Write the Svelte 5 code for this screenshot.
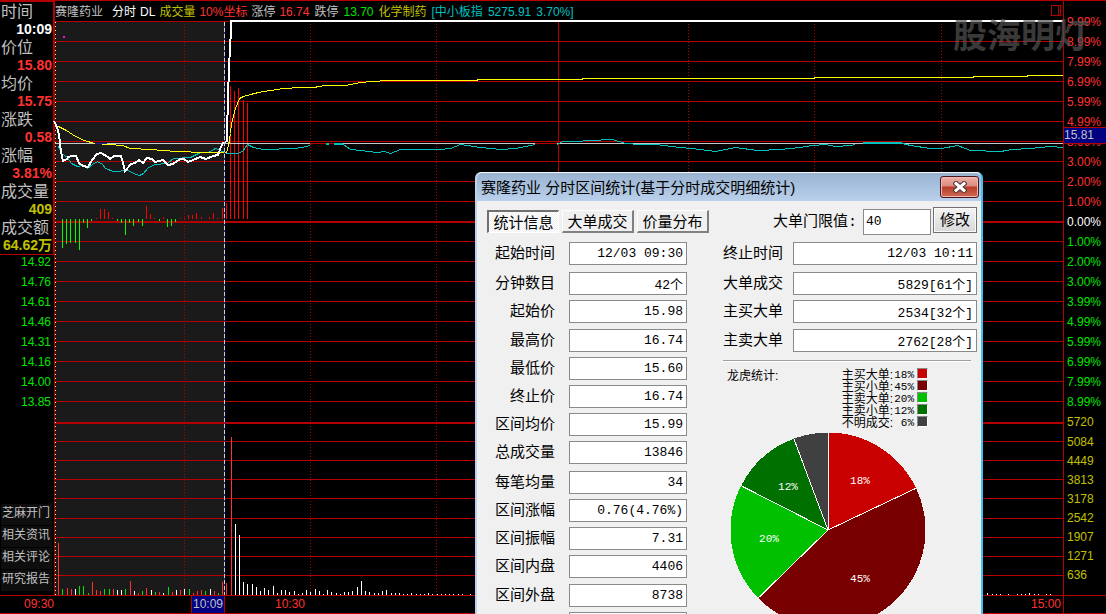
<script>
  const readout = [
    ['时间', '10:09', 'white'],
    ['价位', '15.80', 'red'],
    ['均价', '15.75', 'red'],
    ['涨跌', '0.58', 'red'],
    ['涨幅', '3.81%', 'red'],
    ['成交量', '409', 'yellow'],
    ['成交额', '64.62万', 'yellow']
  ];
  const prices = ['14.92', '14.76', '14.61', '14.46', '14.31', '14.16', '14.00', '13.85'];
  const links = ['芝麻开门', '相关资讯', '相关评论', '研究报告'];

  const up = ['9.99%', '8.99%', '7.99%', '6.99%', '5.99%', '4.99%', '3.99%', '3.00%', '2.00%', '1.00%'];
  const down = ['1.00%', '2.00%', '3.00%', '3.99%', '4.99%', '5.99%', '6.99%', '7.99%', '8.99%'];
  const volumes = ['5084', '4449', '3813', '3178', '2542', '1907', '1271', '636'];

  const chartInfo = [
    ['分时', 'white'],
    ['DL', 'white'],
    ['成交量', 'yellow'],
    ['10%坐标', 'red'],
    ['涨停', 'gray']
  ];
  const quoteInfo = [
    ['16.74', 'red'],
    ['跌停', 'gray'],
    ['13.70', 'green'],
    ['化学制药', 'yellow'],
    ['[中小板指', 'cyan'],
    ['5275.91', 'cyan'],
    ['3.70%]', 'cyan']
  ];

  const priceGrid = Array.from({ length: 20 }, (_, i) => 21 + i * 20).filter((y) => y !== 221);
  const volumeGrid = [441, 460, 479, 498, 518, 537, 556, 575];
  const halfHours = [184, 310, 436, 688, 814, 941];

  const priceLine =
    '54,121 57,127 59,135 61,152 63,161 67,159 68,157 72,156 76,156 79,163 83,166 88,167 92,160 97,154 101,153 108,157 110,159 114,156 121,156 123,163 125,171 131,164 135,163 139,160 143,163 147,158 152,159 155,162 163,160 168,165 173,164 180,159 184,159 188,162 193,160 200,157 206,159 213,156 218,155 221,147 223,143 227,141 227,121 228,110 228,97 229,67 231,30 231,21 1063,21';
  const averageLine =
    '58,126 66,130 75,136 84,140 94,143 108,144 122,145 130,148 150,149 176,151 205,152 226,152 228,145 230,133 231,123 235,108 239,98 243,96 250,94 258,92 270,90 283,88 300,87 313,87 325,85 345,85 355,83 360,82 372,81 388,80 477,80 477,79 582,79 582,78 814,78 814,77 973,77 973,76 1027,76 1027,75 1063,75';
  const indexLines = [
    '58,146 61,153 67,157 71,163 77,166 82,165 87,168 92,164 97,161 102,164 105,168 113,171 128,170 133,173 139,175 143,173 148,167 155,164 167,163 173,158 190,157 200,152 208,152 215,148 222,151 227,153 237,153 242,151 247,144 253,147 263,149 295,148 300,147 307,146 310,144',
    '334,144 343,144 350,149 360,150 377,152 384,151 390,153 400,149 425,149 440,149 450,148 460,144 480,147 500,149 515,148 530,145 535,144',
    '557,144 562,141 575,141 590,140 612,139 625,143 640,144 655,144 680,147 700,149 715,151 735,147 757,150 780,149 800,147 812,145 825,144 835,146 850,145 855,144',
    '863,143 872,143 886,142 902,143 910,145 930,148 941,148 957,145 970,150 1000,151 1012,149 1030,148 1050,146 1063,147'
  ];

  // [x, end y] measured from the flow baseline
  const flowUp = [
    [96, 218], [100, 209], [104, 209], [108, 212], [112, 218], [146, 206], [150, 214], [154, 218], [163, 217],
    [180, 218], [184, 218], [188, 215], [192, 215], [196, 213], [201, 217], [209, 217], [213, 213], [217, 218],
    [222, 208], [226, 203], [230, 86], [234, 91], [238, 88], [243, 100], [247, 103]
  ];
  const flowDown = [
    [62, 248], [66, 244], [70, 243], [75, 243], [79, 250], [83, 223], [87, 228], [91, 221], [117, 221], [121, 223],
    [125, 235], [129, 223], [133, 226], [138, 222], [142, 226], [159, 221], [167, 227], [171, 226], [175, 222]
  ];

  const R = '#ff3232', G = '#00e600', W = '#fff';
  const volumeBars = [
    [58, 543, R], [62, 589, G], [67, 588, R], [71, 589, R], [75, 589, W], [79, 586, G], [83, 586, G], [88, 593, G],
    [92, 582, R], [96, 590, R], [100, 591, R], [104, 589, G], [109, 589, G], [113, 589, R], [117, 590, W],
    [121, 590, W], [125, 589, G], [130, 581, R], [134, 591, W], [138, 593, R], [142, 591, G], [146, 588, R],
    [151, 590, W], [155, 592, G], [159, 592, R], [163, 593, W], [168, 587, G], [172, 592, R], [176, 590, W],
    [180, 590, R], [184, 589, W], [189, 589, G], [193, 593, R], [197, 591, R], [201, 590, R], [205, 591, G],
    [210, 589, W], [214, 591, R], [218, 593, G], [222, 582, R], [226, 583, R], [231, 437, R], [235, 524, W],
    [239, 535, W], [243, 582, W], [247, 584, W], [252, 584, W], [256, 587, W], [260, 591, W], [264, 588, W],
    [268, 590, W], [273, 586, W], [277, 593, W], [281, 590, W], [285, 590, W], [289, 592, W], [294, 591, W],
    [298, 594, W], [302, 593, W], [306, 590, W], [310, 592, W], [315, 589, W], [319, 591, W], [323, 594, W],
    [327, 590, W], [331, 592, W], [336, 593, W], [340, 594, W], [344, 592, W], [348, 592, W], [352, 591, W],
    [357, 587, W], [361, 581, W], [365, 591, W], [369, 592, W], [374, 593, W], [378, 593, W], [382, 591, W],
    [386, 590, W], [391, 593, W], [395, 593, W], [399, 593, W], [403, 594, W], [407, 594, W], [411, 593, W],
    [416, 594, W], [420, 594, W], [424, 594, W], [428, 593, W], [432, 594, W], [437, 594, W], [441, 594, W],
    [445, 594, W], [449, 594, W], [453, 594, W], [458, 594, W], [462, 594, W], [470, 594, W], [987, 593, W],
    [992, 594, W], [996, 594, W], [1000, 594, W], [1008, 594, W], [1017, 594, W], [1021, 594, W], [1025, 594, W],
    [1029, 593, W], [1034, 594, W], [1038, 594, W], [1046, 594, W], [1050, 594, W]
  ];

  const tabs = ['统计信息', '大单成交', '价量分布'];
  let activeTab = $state(0);
  let threshold = $state('40');

  const leftGroups = [
    [['起始时间', '12/03 09:30']],
    [['分钟数目', '42个'], ['起始价', '15.98']],
    [['最高价', '16.74'], ['最低价', '15.60'], ['终止价', '16.74'], ['区间均价', '15.99'], ['总成交量', '13846']],
    [['每笔均量', '34'], ['区间涨幅', '0.76(4.76%)'], ['区间振幅', '7.31'], ['区间内盘', '4406']],
    [['区间外盘', '8738'], ['', '']]
  ];
  const rightGroups = [
    [['终止时间', '12/03 10:11']],
    [['大单成交', '5829[61个]'], ['主买大单', '2534[32个]']],
    [['主卖大单', '2762[28个]']]
  ];

  const slices = [
    { name: '主买大单:', pct: '18%', color: '#c80000', from: 0, to: 0.1795, lx: 130, ly: 48 },
    { name: '主买小单:', pct: '45%', color: '#780000', from: 0.1795, to: 0.627, lx: 130, ly: 146 },
    { name: '主卖大单:', pct: '20%', color: '#00c000', from: 0.627, to: 0.825, lx: 39, ly: 106 },
    { name: '主卖小单:', pct: '12%', color: '#007000', from: 0.825, to: 0.943, lx: 58, ly: 54 },
    { name: '不明成交:', pct: '6%', color: '#404040', from: 0.943, to: 1 }
  ];
  const edge = (t) => {
    const a = t * Math.PI * 2;
    return [98 + 97.5 * Math.sin(a), 98 - 97.5 * Math.cos(a)];
  };
  const wedge = (s) => {
    const [x1, y1] = edge(s.from);
    const [x2, y2] = edge(s.to);
    return `M98 98L${x1} ${y1}A97.5 97.5 0 0 1 ${x2} ${y2}Z`;
  };
</script>

{#snippet fields(groups, side)}
  {#each groups as group, g}
    <div class="group">
      {#each group as [label, value], i}
        <div class="field">
          <label for="{side}-{g}-{i}">{label}</label>
          <input id="{side}-{g}-{i}" type="text" readonly {value} />
        </div>
      {/each}
    </div>
  {/each}
{/snippet}

<div class="terminal">
  <aside class="side">
    <dl class="readout">
      {#each readout as [label, value, tone]}
        <dt>{label}</dt>
        <dd class={tone}>{value}</dd>
      {/each}
    </dl>
    <div class="side-lower">
      <div class="prices green">
        {#each prices as p}<span>{p}</span>{/each}
      </div>
      <nav class="links">
        {#each links as l}<button type="button">{l}</button>{/each}
      </nav>
    </div>
  </aside>

  <header class="bar">
    <span class="gray stock">赛隆药业</span>
    {#each chartInfo as [text, tone]}<span class={tone}>{text}</span>{/each}
    <div class="quote">
      {#each quoteInfo as [text, tone]}<span class={tone}>{text}</span>{/each}
    </div>
    <svg class="pane-icon" viewBox="0 0 10 11" width="10" height="11" shape-rendering="crispEdges">
      <path d="M.5 .5H9.5V10.5H.5ZM7.5 .5V10.5" fill="none" stroke="#b40000" />
    </svg>
  </header>

  <svg class="chart" viewBox="55 21 1008 574" preserveAspectRatio="none" shape-rendering="crispEdges">
    <rect x="55" y="22" width="169" height="573" fill="#1a1a1a" />
    <g fill="#b40000">
      {#each priceGrid as y}<rect x="55" {y} width="1008" height="1" />{/each}
      {#each volumeGrid as y}<rect x="55" {y} width="1008" height="1" />{/each}
      <rect x="55" y="221" width="1008" height="2" />
      <rect x="55" y="422" width="1008" height="2" />
      <rect x="558" y="22" width="1" height="573" />
    </g>
    <g stroke="#b40000" stroke-dasharray="1 2">
      {#each halfHours as x}<path d="M{x + 0.5} 24V595" />{/each}
    </g>
    <path d="M55.5 22V595" stroke="#ffff96" stroke-dasharray="1 3" />

    <g fill="#f00">
      {#each flowUp as [x, y]}<rect {x} {y} width="1" height={219 - y} />{/each}
    </g>
    <g fill="#0f0">
      {#each flowDown as [x, y]}<rect {x} y="219" width="1" height={y - 219} />{/each}
    </g>
    {#each volumeBars as [x, y, color]}<rect {x} {y} width="1" height={595 - y} fill={color} />{/each}

    <rect x="55" y="143" width="1008" height="1" fill="#c8c8c8" />
    <rect x="310" y="143" width="24" height="1" fill="#b40000" />
    <rect x="535" y="143" width="22" height="1" fill="#b40000" />
    <rect x="326" y="143" width="3" height="2" fill="#00c0c0" />
    <rect x="334" y="143" width="9" height="2" fill="#00c0c0" />
    <rect x="863" y="142" width="39" height="2" fill="#00c0c0" />

    {#each indexLines as points}
      <polyline {points} fill="none" stroke="#00c0c0" transform="translate(.5 .5)" />
    {/each}
    <polyline points={averageLine} fill="none" stroke="#ff0" transform="translate(.5 .5)" />
    <rect x="95" y="143" width="12" height="1" fill="#2020a0" />
    <polyline points={priceLine} fill="none" stroke="#fff" stroke-width="2" />
    <rect x="224" y="22" width="1" height="573" fill="#3030a0" />
    <path d="M224.5 22V595" stroke="#d0d0d0" stroke-dasharray="4 2" />
    <rect x="63" y="36" width="2" height="2" fill="#f0f" />
  </svg>

  <aside class="scale">
    <div class="red">{#each up as v}<span>{v}</span>{/each}</div>
    <div class="white"><span>0.00%</span></div>
    <div class="green">{#each down as v}<span>{v}</span>{/each}</div>
    <div class="yellow"><span>5720</span></div>
    <div class="yellow volumes">{#each volumes as v}<span>{v}</span>{/each}</div>
    <output class="marker">15.81</output>
  </aside>

  <footer class="times red">
    <span class="open">09:30</span>
    <div class="axis">
      <span class="cursor">10:09</span>
      <span class="next">10:30</span>
      <span class="close-time">15:00</span>
    </div>
    <span class="corner"></span>
  </footer>

  <div class="watermark">股海明灯</div>

  <section class="dialog" aria-label="分时区间统计">
    <div class="title">
      <h1>赛隆药业 分时区间统计(基于分时成交明细统计)</h1>
      <button type="button" class="close" aria-label="关闭">
        <svg viewBox="0 0 14 12" width="14" height="12">
          <path d="M3 2.5L11 9.5M11 2.5L3 9.5" stroke="#4a3038" stroke-width="5" stroke-linecap="square" />
          <path d="M3 2.5L11 9.5M11 2.5L3 9.5" stroke="#fff" stroke-width="3" stroke-linecap="square" />
        </svg>
      </button>
    </div>

    <div class="body">
      <div class="tools">
        <div class="tabs" role="tablist">
          {#each tabs as tab, i}
            <button type="button" role="tab" aria-selected={activeTab === i} class:active={activeTab === i} onclick={() => (activeTab = i)}>{tab}</button>
          {/each}
        </div>
        <form class="threshold" onsubmit={(e) => e.preventDefault()}>
          <label for="threshold">大单门限值:</label>
          <input id="threshold" type="text" bind:value={threshold} />
          <button type="submit">修改</button>
        </form>
      </div>

      <div class="columns">
        <div class="left">{@render fields(leftGroups, 'left')}</div>
        <div class="right">
          {@render fields(rightGroups, 'right')}
          <hr />
          <div class="dragon">
            <span>龙虎统计:</span>
            <ul>
              {#each slices as s}
                <li><span>{s.name}</span><span class="pct">{s.pct}</span><i style:background={s.color}></i></li>
              {/each}
            </ul>
          </div>
          <svg class="pie" viewBox="0 0 196 196" width="196" height="196">
            <g shape-rendering="crispEdges">
              {#each slices as s}<path d={wedge(s)} fill={s.color} />{/each}
              {#each slices as s}
                <line x1="98" y1="98" x2={edge(s.to)[0]} y2={edge(s.to)[1]} stroke="#fff" />
              {/each}
            </g>
            {#each slices.filter((s) => s.lx) as s}
              <text x={s.lx} y={s.ly + 4} text-anchor="middle">{s.pct}</text>
            {/each}
          </svg>
        </div>
      </div>
    </div>
  </section>
</div>

<style>
  :global(body) {
    background: #000;
  }
  .terminal {
    position: relative;
    display: grid;
    grid-template-columns: 55px minmax(0, 1fr) 43px;
    grid-template-rows: 21px auto auto;
    min-height: 100vh;
    overflow: hidden;
    background: #000;
    color: #c0c0c0;
    font: 12px/20px 'Liberation Sans', 'Noto Sans CJK SC', sans-serif;
  }
  .terminal * {
    box-sizing: border-box;
  }
  button,
  input {
    font: inherit;
    color: inherit;
    margin: 0;
    padding: 0;
  }
  .white { color: #fff; }
  .gray { color: #c0c0c0; }
  .red { color: #ff3232; }
  .yellow { color: #c0c000; }
  .green { color: #00e600; }
  .cyan { color: #00c0c0; }

  .side {
    grid-row: 1 / 3;
    display: flex;
    flex-direction: column;
  }
  .readout {
    margin: 0;
    border: solid #b40000;
    border-width: 2px 2px 1px 0;
    font-size: 16px;
    line-height: 18px;
  }
  .readout dt {
    padding-left: 1px;
    height: 18px;
    line-height: 20px;
  }
  .readout dd {
    margin: 0;
    height: 18px;
    padding-right: 1px;
    text-align: right;
    font-size: 14px;
    font-weight: bold;
    white-space: nowrap;
  }
  .side-lower {
    flex: 1;
    display: flex;
    flex-direction: column;
    justify-content: space-between;
    border-right: 1px solid #b40000;
  }
  .prices {
    display: grid;
    margin-top: -3px;
    padding-right: 3px;
    text-align: right;
  }
  .links {
    display: grid;
    gap: 1px;
    padding: 0 2px 4px 1px;
  }
  .links button {
    height: 21px;
    padding: 0 0 2px 1px;
    border: 0;
    background: #0e0e0e;
    text-align: left;
    line-height: 19px;
    white-space: nowrap;
  }

  .bar {
    display: flex;
    gap: 4px;
    border-top: 1px solid #b40000;
    line-height: 22px;
    white-space: nowrap;
  }
  .stock {
    margin-right: 5px;
  }
  .quote {
    display: flex;
    gap: 5px;
  }
  .pane-icon {
    margin: 4px 2px 0 auto;
  }
  .chart {
    display: block;
    width: 100%;
    height: 574px;
    overflow: visible;
  }

  .scale {
    position: relative;
    grid-column: 3;
    grid-row: 1 / 3;
    border: solid #b40000;
    border-width: 1px 0 0 1px;
    padding-top: 11px;
  }
  .scale span {
    display: block;
    padding-left: 3px;
  }
  .volumes span {
    line-height: 19px;
  }
  .volumes span:first-child {
    line-height: 20px;
  }
  .marker {
    position: absolute;
    top: 126px;
    left: 0;
    right: 0;
    height: 17px;
    border: solid #b40000;
    border-width: 1px 0;
    background: #000080;
    color: #c0c0c0;
    line-height: 15px;
  }

  .times {
    grid-column: 1 / -1;
    display: grid;
    grid-template-columns: 55px minmax(0, 1fr) 43px;
    border: solid #b40000;
    border-width: 1px 0;
    line-height: 17px;
  }
  .open {
    padding-right: 1px;
    text-align: right;
  }
  .axis {
    display: grid;
    grid-template-columns: 34px 85px 1fr;
    padding-left: 136px;
  }
  .cursor {
    border: solid #b40000;
    border-width: 0 1px;
    background: #000080;
    color: #c0c0c0;
    text-align: center;
  }
  .next {
    text-align: right;
    padding-right: 5px;
  }
  .close-time {
    text-align: right;
    padding-right: 2px;
  }
  .corner {
    border-left: 1px solid #b40000;
  }

  .watermark {
    position: absolute;
    top: 16px;
    right: 17px;
    color: rgba(84, 84, 84, 0.7);
    font-size: 34px;
    font-weight: bold;
    line-height: 40px;
  }

  .dialog {
    position: absolute;
    top: 172px;
    right: 123px;
    width: 508px;
    border: solid;
    border-width: 1px 2px 2px;
    border-color: #f4f8fc #40bff0 #40bff0 #bcd3ee;
    border-radius: 6px 6px 0 0;
    background: #f0f0f0;
    color: #000;
    font-family: 'Liberation Mono', 'Noto Sans CJK SC', monospace;
    font-size: 15px;
  }
  .title {
    display: flex;
    justify-content: space-between;
    align-items: flex-start;
    height: 28px;
    padding: 3px 2px 0 4px;
    border-radius: 5px 5px 0 0;
    background: linear-gradient(#98b2d0, #bad1ec);
  }
  .title h1 {
    margin: 0;
    font: 15px/24px 'Liberation Sans', 'Noto Sans CJK SC', sans-serif;
    white-space: nowrap;
  }
  .close {
    display: grid;
    place-items: center;
    width: 39px;
    height: 22px;
    border: 1px solid #481420;
    border-radius: 3px;
    background: linear-gradient(#eeb0a6, #dc8c80 45%, #b83c28 50%, #cc6a54);
    box-shadow: inset 0 0 0 1px #f0b8b0;
  }
  .body {
    padding: 6px 4px 6px 10px;
  }
  .tools {
    display: flex;
    justify-content: space-between;
    align-items: flex-start;
    height: 28px;
    margin-bottom: 7px;
  }
  .tabs {
    display: flex;
    gap: 3px;
    padding-top: 3px;
  }
  .tabs button {
    width: 72px;
    height: 23px;
    border: solid;
    border-width: 1px 2px 2px 1px;
    border-color: #fff #808080 #808080 #fff;
    background: #f0f0f0;
    padding-top: 3px;
    line-height: 20px;
    white-space: nowrap;
  }
  .tabs .active {
    border-width: 2px 1px 1px 2px;
    border-color: #707070 #fff #fff #707070;
    background: repeating-conic-gradient(#f0f0f0 0 25%, #fff 0 50%) 0 0 / 2px 2px;
  }
  .threshold {
    display: flex;
    align-items: flex-start;
  }
  .threshold label {
    line-height: 32px;
  }
  .threshold input {
    width: 68px;
    height: 26px;
    margin: 2px 2px 0 6px;
    padding: 0 2px 2px;
    border: 1px solid #8a8a8a;
    border-radius: 0;
    background: #fff;
    font-size: 13px;
  }
  .threshold button {
    width: 44px;
    height: 26px;
    padding-top: 3px;
    border: 1px solid #707070;
    background: linear-gradient(#f4f4f4, #e6e6e6 50%, #d8d8d8);
    box-shadow: inset 0 0 0 1px #fafafa;
    line-height: 22px;
  }

  .columns {
    display: grid;
    grid-template-columns: 200px 1fr;
    gap: 36px;
  }
  .group {
    display: grid;
    gap: 5px;
  }
  .group:nth-child(even) {
    margin-top: 7px;
  }
  .group:nth-child(odd):not(:first-child) {
    margin-top: 6px;
  }
  .field {
    display: grid;
    grid-template-columns: 68px 1fr;
    gap: 14px;
    height: 23px;
  }
  .right .field {
    grid-template-columns: 60px 1fr;
    gap: 10px;
  }
  .field label {
    text-align: right;
    line-height: 26px;
    white-space: nowrap;
  }
  .field input {
    width: 100%;
    height: 23px;
    min-width: 0;
    padding: 0 3px 0 0;
    border: 1px solid #8a8a8a;
    border-radius: 0;
    background: #fff;
    font-size: 13px;
    text-align: right;
  }
  hr {
    width: 248px;
    margin: 8px 0 0;
    border: solid;
    border-width: 1px 0;
    border-color: #a0a0a0 transparent #fff;
  }
  .dragon {
    display: flex;
    justify-content: space-between;
    padding: 6px 49px 0 4px;
    font: 12px/16px 'Liberation Sans', 'Noto Sans CJK SC', sans-serif;
  }
  .dragon ul {
    margin: 0;
    padding: 0;
    list-style: none;
  }
  .dragon li {
    display: flex;
    height: 12px;
    line-height: 14px;
  }
  .dragon .pct {
    width: 21px;
    font-family: 'Liberation Mono', monospace;
    font-size: 11px;
    text-align: right;
  }
  .dragon i {
    width: 11px;
    height: 11px;
    margin-left: 3px;
    border: 1px solid;
    border-color: #888 #fff #fff #888;
  }
  .pie {
    display: block;
    margin: 4px 0 0 7px;
  }
  .pie text {
    fill: #fff;
    font-size: 11px;
  }
</style>
